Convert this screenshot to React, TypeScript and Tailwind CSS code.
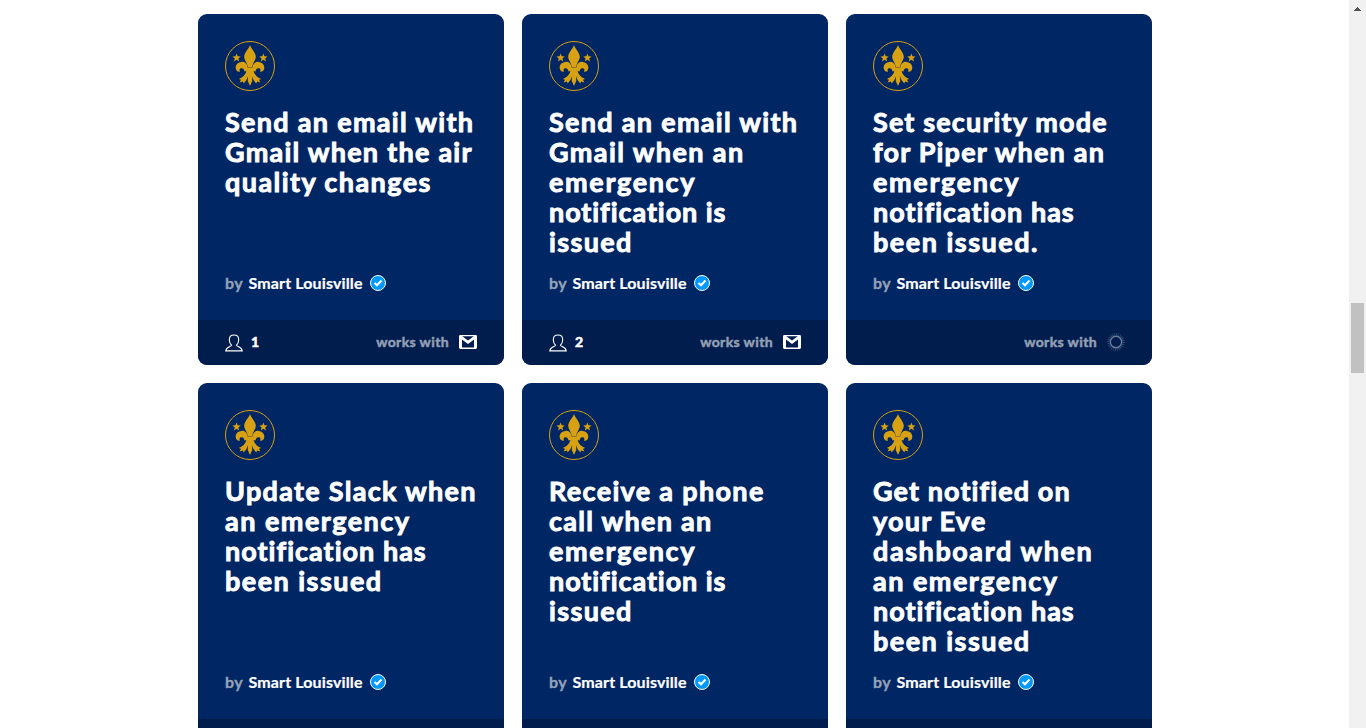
import React from "react";

type Service = "gmail" | "piper" | "none";

interface Line {
  text: string;
  tracking: string;
}

interface Applet {
  lines: Line[];
  users?: number;
  service: Service;
}

const sendAnEmail: Line = { text: "Send an email with", tracking: "tracking-[1.3px]" };
const emergency: Line = { text: "emergency", tracking: "tracking-[1.65px]" };
const anEmergency: Line = { text: "an emergency", tracking: "tracking-[1.48px]" };
const notificationIs: Line = { text: "notification is", tracking: "tracking-[0.93px]" };
const notificationHas: Line = { text: "notification has", tracking: "tracking-[1.02px]" };
const issued: Line = { text: "issued", tracking: "tracking-[1.35px]" };
const beenIssued: Line = { text: "been issued", tracking: "tracking-[1.46px]" };

const topRow: Applet[] = [
  {
    lines: [
      sendAnEmail,
      { text: "Gmail when the air", tracking: "tracking-[1.25px]" },
      { text: "quality changes", tracking: "tracking-[1.42px]" },
    ],
    users: 1,
    service: "gmail",
  },
  {
    lines: [sendAnEmail, { text: "Gmail when an", tracking: "tracking-[1.4px]" }, emergency, notificationIs, issued],
    users: 2,
    service: "gmail",
  },
  {
    lines: [
      { text: "Set security mode", tracking: "tracking-[1.15px]" },
      { text: "for Piper when an", tracking: "tracking-[1.2px]" },
      emergency,
      notificationHas,
      { text: "been issued.", tracking: "tracking-[1.5px]" },
    ],
    service: "piper",
  },
];

const bottomRow: Applet[] = [
  {
    lines: [{ text: "Update Slack when", tracking: "tracking-[1.3px]" }, anEmergency, notificationHas, beenIssued],
    service: "none",
  },
  {
    lines: [
      { text: "Receive a phone", tracking: "tracking-[1.33px]" },
      { text: "call when an", tracking: "tracking-[1.28px]" },
      emergency,
      notificationIs,
      issued,
    ],
    service: "none",
  },
  {
    lines: [
      { text: "Get notified on", tracking: "tracking-[1.1px]" },
      { text: "your Eve", tracking: "tracking-[1.2px]" },
      { text: "dashboard when", tracking: "tracking-[1.57px]" },
      anEmergency,
      notificationHas,
      beenIssued,
    ],
    service: "none",
  },
];

function FleurLogo() {
  return (
    <svg className="block size-[50px]" viewBox="0 0 50 50" fill="#d8a111">
      <circle cx="25" cy="25" r="24.5" fill="none" stroke="#d8a111" strokeWidth="1" />
      <path d="M25 4C23.8 8 19.2 11.5 19.2 15.8C19.2 19.4 22.4 22 23 26.6H27C27.6 22 30.8 19.4 30.8 15.8C30.8 11.5 26.2 8 25 4Z" />
      <path d="M22.8 26.8C22.2 22.4 19.4 20.6 16.4 20.9C12.6 21.2 10.4 24 10.7 27C11 29.8 12.6 31.2 15 30.8C14 28.4 14.8 27 16.6 27.2C18.4 27.4 19.4 28.6 19.3 30.4L22.8 29Z" />
      <path d="M27.2 26.8C27.8 22.4 30.6 20.6 33.6 20.9C37.4 21.2 39.6 24 39.3 27C39 29.8 37.4 31.2 35 30.8C36 28.4 35.2 27 33.4 27.2C31.6 27.4 30.6 28.6 30.7 30.4L27.2 29Z" />
      <path d="M20.2 26.8H29.8V30.2H20.2Z" />
      <path d="M21.4 30C20.6 33.6 18 36.4 13.8 38L16 38.7L14.6 41.4L18 40.6L18.6 42.6C20.8 40.6 22.4 37.8 23.2 34.6L25 44.8L26.8 34.6C27.6 37.8 29.2 40.6 31.4 42.6L32 40.6L35.4 41.4L34 38.7L36.2 38C32 36.4 29.4 33.6 28.6 30Z" />
      <path d="M23.4 31H26.6L27.3 40L25 44.8L22.7 40Z" />
      <path d="M11.6 12.4L12.7 15.3L15.8 15.5L13.4 17.4L14.2 20.4L11.6 18.7L9 20.4L9.8 17.4L7.4 15.5L10.5 15.3Z" />
      <path d="M38.4 12.4L39.5 15.3L42.6 15.5L40.2 17.4L41 20.4L38.4 18.7L35.8 20.4L36.6 17.4L34.2 15.5L37.3 15.3Z" />
    </svg>
  );
}

function VerifiedBadge() {
  return (
    <svg className="block size-4" viewBox="0 0 16 16">
      <circle cx="8" cy="8" r="7.5" fill="#0099ff" stroke="#fff" strokeWidth="1" />
      <path d="M4.5 8L7 10.3L11.5 5.6" fill="none" stroke="#fff" strokeWidth="2.1" />
    </svg>
  );
}

function PersonIcon() {
  return (
    <svg className="block h-[18px] w-[18px]" viewBox="0 0 18 18" fill="none" stroke="#fff" strokeWidth="1.1">
      <path d="M6.6 11.3C5 10 4.3 7.8 4.3 5.7C4.3 2.8 6.2 1 9 1C11.8 1 13.7 2.8 13.7 5.7C13.7 7.8 13 10 11.4 11.3C11.6 12.8 16.8 12.6 17.2 16.9H0.8C1.2 12.6 6.4 12.8 6.6 11.3Z" />
    </svg>
  );
}

function GmailIcon() {
  return (
    <svg className="-mt-px block h-[14px] w-[18px]" viewBox="0 0 18 14">
      <rect width="18" height="14" rx="1.4" fill="#fff" />
      <path d="M3.2 1.2H14.8L9 5.6Z" fill="#001d4d" />
      <path d="M3 12.6V4.6L9 9L15 4.6V12.6Z" fill="#001d4d" />
    </svg>
  );
}

function PiperIcon() {
  return (
    <svg className="-mt-0.5 block size-[18px]" viewBox="0 0 18 18" fill="none" stroke="#6d7e9f">
      <circle cx="9" cy="9" r="5.7" strokeWidth="1.4" />
      <circle cx="9" cy="9" r="7.3" strokeWidth="1.1" strokeDasharray="1.1 0.8" opacity="0.55" />
      <circle cx="9" cy="9" r="8.5" strokeWidth="1" strokeDasharray="1 1.2" opacity="0.45" />
    </svg>
  );
}

function AppletCard({ applet, tall }: { applet: Applet; tall?: boolean }) {
  return (
    <article className={`flex flex-col overflow-hidden rounded-[9px] bg-[#002663] ${tall ? "h-[381px]" : "h-[351px]"}`}>
      <div className="flex flex-1 flex-col px-[27px] pt-[27px] pb-[26px]">
        <FleurLogo />
        <h2 className="mt-4 text-[27px] leading-[30px] font-bold whitespace-nowrap text-white [-webkit-text-stroke:0.9px_#fff]">
          {applet.lines.map((line) => (
            <span key={line.text} className={`block ${line.tracking}`}>
              {line.text}
            </span>
          ))}
        </h2>
        <div className="mt-auto flex h-[22px] items-center text-base leading-[22px] font-bold text-white">
          <span className="w-[23.5px] tracking-[0.3px] text-[#94a2bb] [-webkit-text-stroke:0.3px_#94a2bb]">by</span>
          <span className="w-[121.5px] tracking-[0.13px] whitespace-nowrap [-webkit-text-stroke:0.2px_#fff]">
            Smart Louisville
          </span>
          <VerifiedBadge />
        </div>
      </div>
      {!tall && (
        <footer className="flex h-[45px] shrink-0 items-center bg-[#001d4d] px-[27px] text-sm font-bold text-white">
          {applet.users !== undefined && (
            <div className="flex items-center gap-2">
              <PersonIcon />
              <span className="-mt-0.5 [-webkit-text-stroke:0.6px_#fff]">{applet.users}</span>
            </div>
          )}
          <div className="ml-auto flex items-center gap-[10px]">
            <span className="-mt-0.5 tracking-[0.38px] text-[#949fb3] [-webkit-text-stroke:0.5px_#949fb3]">works with</span>
            {applet.service === "gmail" && <GmailIcon />}
            {applet.service === "piper" && <PiperIcon />}
          </div>
        </footer>
      )}
      {tall && <footer className="h-[45px] shrink-0 bg-[#001d4d]" />}
    </article>
  );
}

function Scrollbar() {
  return (
    <div className="flex w-[17px] shrink-0 flex-col items-center bg-[#f1f1f1]">
      <svg className="mt-[7px] block h-1 w-[7px]" viewBox="0 0 7 4" fill="#505050" shapeRendering="crispEdges">
        <path d="M3 0H4V1H5V2H6V3H7V4H0V3H1V2H2V1H3Z" />
      </svg>
      <div className="mt-[292px] h-[70px] w-[13px] bg-[#c1c1c1]" />
    </div>
  );
}

export default function App() {
  return (
    <div className="flex h-[728px] w-[1366px] overflow-hidden bg-white font-['Lato',sans-serif]">
      <main className="h-full flex-1 overflow-hidden pt-[14px] pl-[198px]">
        <div className="grid grid-cols-[306px_306px_306px] gap-[18px]">
          {topRow.map((applet, i) => (
            <AppletCard key={i} applet={applet} />
          ))}
          {bottomRow.map((applet, i) => (
            <AppletCard key={i} applet={applet} tall />
          ))}
        </div>
      </main>
      <Scrollbar />
    </div>
  );
}
